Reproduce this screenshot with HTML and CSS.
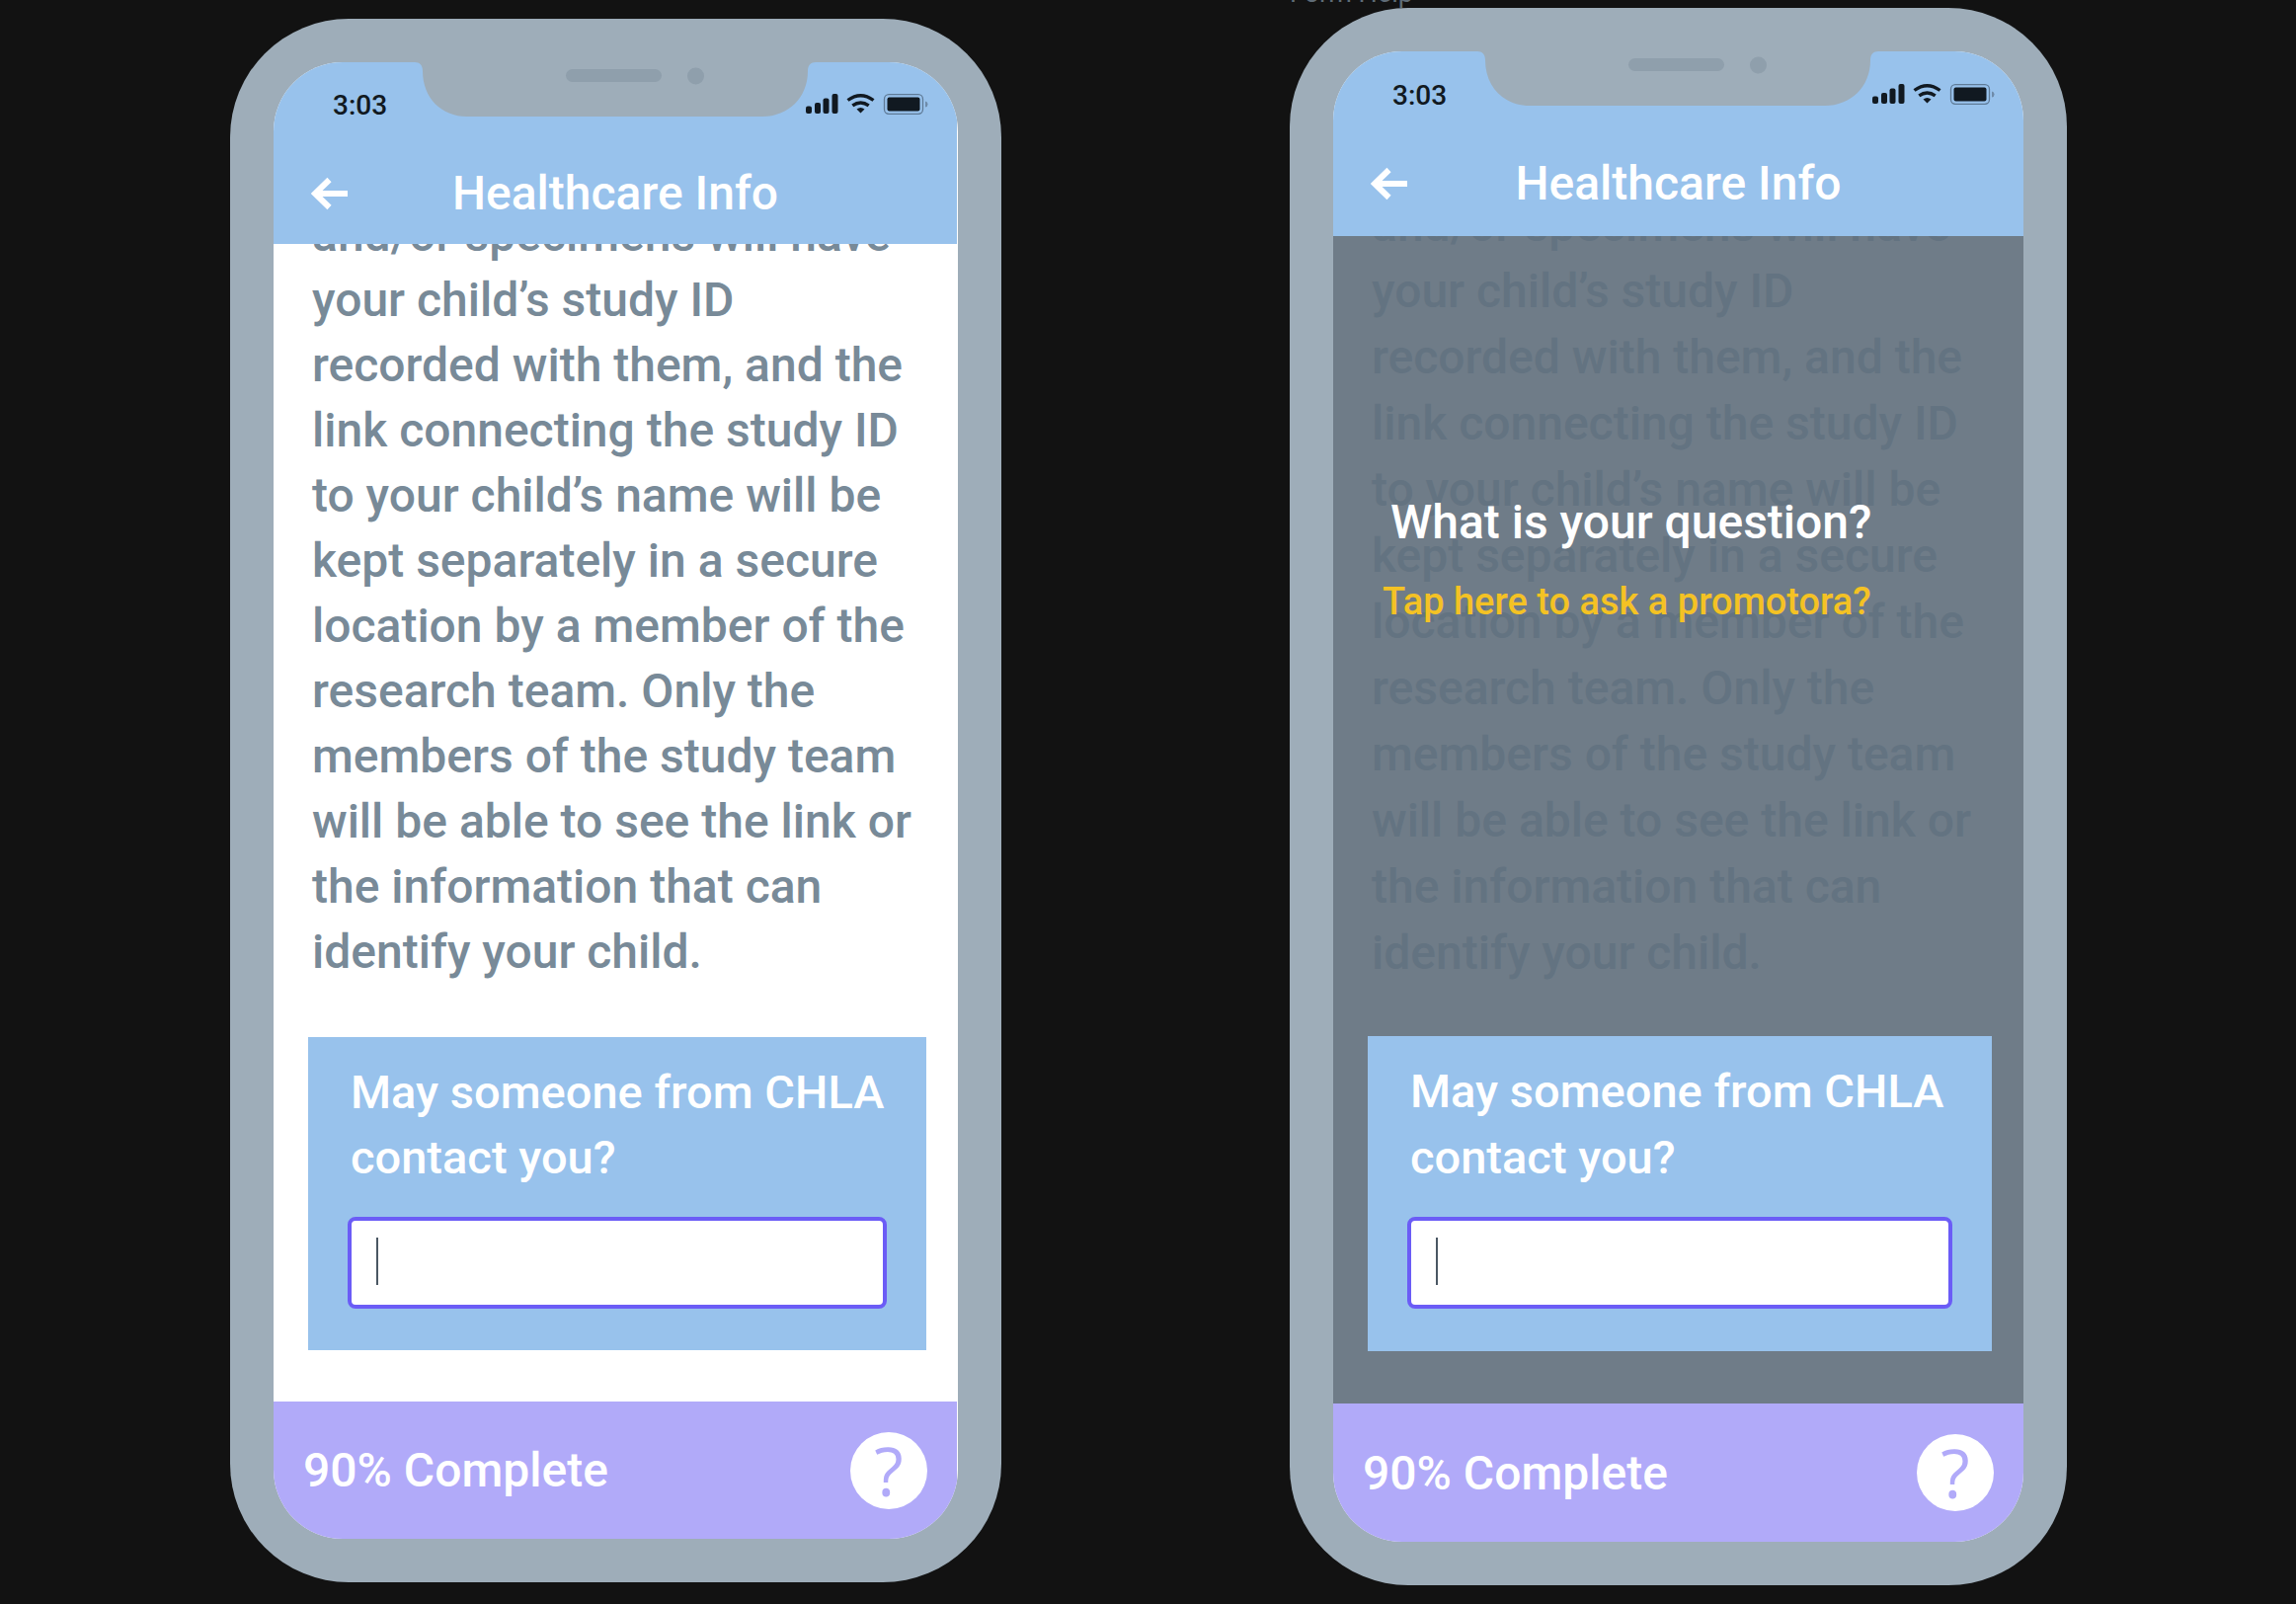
FILE: index.html
```
<!DOCTYPE html>
<html lang="en">
<head>
<meta charset="utf-8">
<meta name="viewport" content="width=device-width, initial-scale=1">
<title>Healthcare Info</title>
<link rel="stylesheet" href="styles.css">
</head>
<body>
<svg class="sprite" aria-hidden="true">
  <symbol id="notch" viewBox="0 0 406 55">
    <path fill="#9eadb9" d="M0 0C5 0 8 3 8 9C8 36 27 55 53 55H352C378 55 398 36 398 9C398 3 401 0 406 0Z"/>
    <rect fill="#8f9fac" x="153" y="7" width="97" height="13" rx="6.5"/>
    <circle fill="#8f9fac" cx="284.5" cy="14" r="8.5"/>
  </symbol>
  <symbol id="signals" viewBox="0 0 124 22">
    <g fill="#111921">
      <rect x="0" y="12.500" width="6" height="7.500" rx="2"/>
      <rect x="9" y="9" width="6" height="11" rx="2"/>
      <rect x="17.500" y="4.500" width="6" height="15.500" rx="2"/>
      <rect x="26.500" y="0" width="6" height="20" rx="2"/>
      <path d="M55.500 19.500L51.500 15.500Q55.500 12.500 59.500 15.500Z"/>
      <rect x="82.500" y="3.500" width="33" height="14" rx="2"/>
    </g>
    <g fill="none" stroke="#111921" stroke-width="3.400">
      <path d="M42.500 6.500Q55.500-3 68.500 6.500"/>
      <path d="M47.300 11.800Q55.500 6 63.700 11.800"/>
    </g>
    <rect x="79.500" y="0.700" width="39" height="19.600" rx="4.500" fill="none" stroke="#5f7b97" stroke-width="1.300"/>
    <path d="M121 7.500Q123.500 8 123.500 10.500T121 13.500Z" fill="#6f8ba9"/>
  </symbol>
  <symbol id="arrow-left" viewBox="0 0 38 34">
    <path d="M37 17H4M18.500 3L4 17L18.500 31" fill="none" stroke="#fff" stroke-width="6"/>
  </symbol>
</svg>

<main class="board">
  <section class="phone phone-info">
    <div class="screen">
      <svg class="notch"><use href="#notch"/></svg>
      <header class="top-bar">
        <div class="status">
          <span class="clock">3:03</span>
          <svg class="signals" role="img" aria-label="Signal, Wi-Fi and battery"><use href="#signals"/></svg>
        </div>
        <div class="title-row">
          <button class="back" type="button" aria-label="Back"><svg><use href="#arrow-left"/></svg></button>
          <h1>Healthcare Info</h1>
        </div>
      </header>
      <div class="content">
        <p class="copy">and/or specimens will have<br>your child’s study ID<br>recorded with them, and the<br>link connecting the study ID<br>to your child’s name will be<br>kept separately in a secure<br>location by a member of the<br>research team. Only the<br>members of the study team<br>will be able to see the link or<br>the information that can<br>identify your child.</p>
        <form class="card">
          <label for="contact-a">May someone from CHLA<br>contact you?</label>
          <div class="field"><input id="contact-a" type="text"><span class="caret"></span></div>
        </form>
      </div>
      <footer class="progress">
        <span>90% Complete</span>
        <button class="help" type="button" aria-label="Help">?</button>
      </footer>
    </div>
  </section>

  <div class="help-board">
    <h2 class="board-name">Form Help</h2>
    <section class="phone phone-help">
      <div class="screen">
        <svg class="notch"><use href="#notch"/></svg>
        <header class="top-bar">
          <div class="status">
            <span class="clock">3:03</span>
            <svg class="signals" role="img" aria-label="Signal, Wi-Fi and battery"><use href="#signals"/></svg>
          </div>
          <div class="title-row">
            <button class="back" type="button" aria-label="Back"><svg><use href="#arrow-left"/></svg></button>
            <h1>Healthcare Info</h1>
          </div>
        </header>
        <div class="content">
          <p class="copy">and/or specimens will have<br>your child’s study ID<br>recorded with them, and the<br>link connecting the study ID<br>to your child’s name will be<br>kept separately in a secure<br>location by a member of the<br>research team. Only the<br>members of the study team<br>will be able to see the link or<br>the information that can<br>identify your child.</p>
          <div class="question">
            <p>What is your question?</p>
            <a href="#promotora">Tap here to ask a promotora?</a>
          </div>
          <form class="card">
            <label for="contact-b">May someone from CHLA<br>contact you?</label>
            <div class="field"><input id="contact-b" type="text"><span class="caret"></span></div>
          </form>
        </div>
        <footer class="progress">
          <span>90% Complete</span>
          <button class="help" type="button" aria-label="Help">?</button>
        </footer>
      </div>
    </section>
  </div>
</main>
</body>
</html>
```
FILE: styles.css
```
* { box-sizing: border-box; }

body {
  margin: 0;
  background: #121212;
  font-family: Roboto, "Liberation Sans", sans-serif;
  font-weight: 500;
  font-size: 48px;
  overflow-x: hidden;
}

h1, h2, p { margin: 0; font-size: inherit; font-weight: inherit; }
button { padding: 0; border: 0; background: none; font: inherit; cursor: pointer; }
.sprite { display: none; }

.board {
  display: grid;
  grid-template-columns: minmax(0, 781fr) minmax(0, 787fr);
  column-gap: 292px;
  align-items: start;
  padding: 0 232px 0 233px;
}

.phone {
  --line: 66px;
  padding: 44px;
  border-radius: 120px;
  background: #9eadb9;
}
.phone-info { margin-top: 19px; }
.phone-help { --line: 67px; }

.board-name {
  height: 28px;
  margin-top: -20px;
  line-height: 27px;
  font-size: 27px;
  font-weight: 400;
  color: #5f6c77;
}

.screen {
  position: relative;
  overflow: hidden;
  border-radius: 70px;
  background: #fff;
}

.notch {
  position: absolute;
  top: 0;
  left: 50%;
  width: 406px;
  height: 55px;
  margin-left: -204px;
}

.top-bar {
  padding: 27px 29px 23px 38px;
  background: #98c2ec;
}
.phone-info .top-bar, .phone-info .progress { margin-right: 1px; }
.phone-help .top-bar { padding-top: 28px; padding-bottom: 25px; }

.status {
  display: flex;
  justify-content: space-between;
  align-items: center;
  height: 32px;
  padding-left: 22px;
  font-size: 28px;
  color: #111921;
}
.signals { width: 124px; height: 22px; }

.title-row {
  display: grid;
  grid-template-columns: 1fr auto 1fr;
  align-items: center;
  margin: 46px 9px 0 0;
  line-height: 56px;
  color: #fff;
}
.back { width: 38px; height: 34px; }
.back svg { display: block; width: 38px; height: 34px; }

.content {
  position: relative;
  overflow: hidden;
  padding: 0 32px 52px 35px;
  line-height: var(--line);
}
.phone-help .content { padding-bottom: 53px; background: #6f7c88; }

.copy {
  margin-top: -42px;
  padding-left: 4px;
  white-space: nowrap;
  color: #788a98;
}
.phone-help .copy { margin-top: -45px; color: #637381; }

.question {
  position: absolute;
  top: 256px;
  left: 50px;
  color: #fff;
}
.question p { padding-left: 8px; }
.question a {
  display: block;
  margin-top: 14px;
  font-size: 38px;
  color: #f4c224;
  text-decoration: none;
}

.card {
  margin-top: 53px;
  padding: 23px 40px 42px;
  background: #98c2ec;
  font-size: 47px;
  color: #fff;
}
.phone-help .card { margin-top: 51px; padding-top: 22px; padding-bottom: 43px; }
.card label { display: block; padding-left: 3px; white-space: nowrap; }

.field { position: relative; margin-top: 27px; }
.field input {
  display: block;
  width: 100%;
  height: 93px;
  padding: 0 26px;
  border: 4px solid #6b5cf6;
  border-radius: 8px;
  background: #fff;
  font: inherit;
  color: #4a5763;
}
.caret {
  position: absolute;
  top: 21px;
  left: 29px;
  width: 2px;
  height: 48px;
  background: #4a5763;
}

.progress {
  display: flex;
  justify-content: space-between;
  align-items: center;
  height: 139px;
  padding: 0 30px;
  background: #b1aaf9;
  color: #fff;
}
.phone-help .progress { height: 140px; }
.help {
  width: 78px;
  height: 78px;
  border-radius: 50%;
  background: #fff;
  font: 400 68px/78px "Open Sans", "Noto Sans", sans-serif;
  color: #b1aaf9;
}
```
